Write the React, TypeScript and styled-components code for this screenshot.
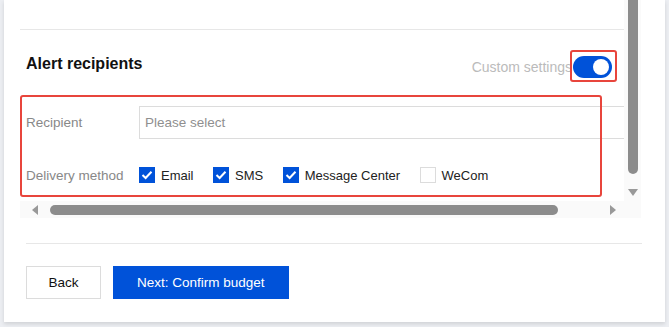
import React from "react";
import styled, { createGlobalStyle } from "styled-components";

const Global = createGlobalStyle`
  html, body { margin: 0; padding: 0; background: #eceef2; }
  body { font-family: "Liberation Sans", Arial, sans-serif; overflow: hidden; }
`;

const Page = styled.div`
  width: 669px;
  height: 327px;
  padding: 0 4px 5px 4px;
  box-sizing: border-box;
  display: flex;
`;

const Card = styled.div`
  flex: 1;
  background: #fff;
  box-shadow: 0 2px 4px rgba(0, 0, 0, 0.12);
  display: flex;
  flex-direction: column;
  padding-left: 16px;
  box-sizing: border-box;
`;

const ScrollBox = styled.div`
  width: 621px;
  height: 218px;
  display: grid;
  grid-template-columns: 604px 17px;
  grid-template-rows: 201px 17px;
`;

const Viewport = styled.div`
  overflow: hidden;
  position: relative;
  padding: 0 12px 0 6px;
  box-sizing: border-box;
  display: flex;
  flex-direction: column;
`;

const TopSpace = styled.div`
  height: 29px;
  flex: none;
  border-bottom: 1px solid #e7e7e7;
  margin: 0 -12px 0 -6px;
`;

const SectionHeader = styled.div`
  display: flex;
  align-items: center;
  justify-content: space-between;
  height: 32px;
  margin-top: 19px;
`;

const Title = styled.div`
  font-size: 16px;
  font-weight: 700;
  color: #111;
  margin-top: -3px;
`;

const SwitchWrap = styled.div`
  display: flex;
  align-items: center;
  gap: 1px;
`;

const SwitchLabel = styled.span`
  font-size: 14px;
  color: #bbbbbb;
  margin-top: 3px;
`;

const ToggleBox = styled.div`
  position: relative;
  margin-top: 4px;
`;

const Toggle = styled.div`
  width: 39px;
  height: 22px;
  border-radius: 11px;
  background: #0052d9;
  position: relative;
  &::after {
    content: "";
    position: absolute;
    right: 3px;
    top: 3px;
    width: 16px;
    height: 16px;
    border-radius: 50%;
    background: #fff;
  }
`;

const Highlight = styled.div<{ $w: number; $h: number; $l: number; $t: number }>`
  position: absolute;
  left: ${(p) => p.$l}px;
  top: ${(p) => p.$t}px;
  width: ${(p) => p.$w}px;
  height: ${(p) => p.$h}px;
  border: 2px solid #e8453c;
  border-radius: 3px;
  box-sizing: border-box;
  pointer-events: none;
`;

const Form = styled.div`
  display: flex;
  flex-direction: column;
  gap: 28px;
  margin-top: 25px;
  width: 620px;
`;

const Row = styled.div`
  display: flex;
  align-items: center;
`;

const Label = styled.div`
  width: 113px;
  flex: none;
  font-size: 13.5px;
  color: #888;
`;

const Input = styled.div`
  width: 500px;
  height: 33px;
  border: 1px solid #dcdcdc;
  box-sizing: border-box;
  display: flex;
  align-items: center;
  padding-left: 5px;
  font-size: 13.5px;
  color: #8f8f8f;
  flex: none;
`;

const Options = styled.div`
  display: flex;
  align-items: center;
  gap: 19.5px;
`;

const Option = styled.label`
  display: flex;
  align-items: center;
  gap: 6px;
  font-size: 13px;
  color: #222;
`;

const Box = styled.span<{ $checked: boolean }>`
  width: 16px;
  height: 16px;
  box-sizing: border-box;
  background: ${(p) => (p.$checked ? "#0052d9" : "#fff")};
  border: 1px solid ${(p) => (p.$checked ? "#0052d9" : "#dcdcdc")};
  display: flex;
  align-items: center;
  justify-content: center;
`;

const VTrack = styled.div`
  background: #fafafa;
  display: flex;
  flex-direction: column;
  align-items: center;
`;

const VThumb = styled.div`
  width: 10px;
  height: 177px;
  background: #8c8c8c;
  border-radius: 0 0 5px 5px;
  margin-left: 1px;
`;

const HTrack = styled.div`
  background: #fafafa;
  display: flex;
  align-items: center;
  padding: 0 8px 0 11px;
  box-sizing: border-box;
`;

const HThumb = styled.div`
  width: 508px;
  height: 10px;
  border-radius: 5px;
  background: #8c8c8c;
  margin: 0 51px 0 11px;
  flex: none;
`;

const Corner = styled.div`
  background: #fafafa;
`;

const Footer = styled.div`
  margin-top: 25px;
  margin-left: 6px;
  width: 616px;
  border-top: 1px solid #e7e7e7;
  padding-top: 22px;
  display: flex;
  gap: 12px;
`;

const Button = styled.button<{ $primary?: boolean }>`
  height: 33px;
  padding: 0 ${(p) => (p.$primary ? 23 : 21.5)}px;
  border: 1px solid ${(p) => (p.$primary ? "#0052d9" : "#dcdcdc")};
  background: ${(p) => (p.$primary ? "#0052d9" : "#fff")};
  color: ${(p) => (p.$primary ? "#fff" : "#111")};
  font-family: "Liberation Sans", Arial, sans-serif;
  font-size: 13.5px;
  border-radius: 0;
  cursor: pointer;
`;

const Check = () => (
  <svg width="12" height="10" viewBox="0 0 12 10">
    <path d="M1.5 5 L4.6 8 L10.5 1.8" fill="none" stroke="#fff" strokeWidth="2" />
  </svg>
);

const Tri = ({ dir }: { dir: "left" | "right" | "down" }) => {
  const d =
    dir === "left"
      ? "M7 0 L7 10 L1 5 Z"
      : dir === "right"
      ? "M1 0 L1 10 L7 5 Z"
      : "M0 1 L10 1 L5 8 Z";
  const w = dir === "down" ? 10 : 8;
  const h = dir === "down" ? 9 : 10;
  return (
    <svg width={w} height={h} viewBox={`0 0 ${w} ${h}`} style={{ flex: "none" }}>
      <path d={d} fill="#999" />
    </svg>
  );
};

const options = [
  { label: "Email", checked: true },
  { label: "SMS", checked: true },
  { label: "Message Center", checked: true },
  { label: "WeCom", checked: false },
];

export default function App() {
  return (
    <>
      <Global />
      <Page>
        <Card>
          <ScrollBox>
            <Viewport>
              <TopSpace />
              <SectionHeader>
                <Title>Alert recipients</Title>
                <SwitchWrap>
                  <SwitchLabel>Custom settings</SwitchLabel>
                  <ToggleBox>
                    <Toggle />
                    <Highlight $l={-3} $t={-6} $w={47} $h={32} />
                  </ToggleBox>
                </SwitchWrap>
              </SectionHeader>
              <Form>
                <Row>
                  <Label>Recipient</Label>
                  <Input>Please select</Input>
                </Row>
                <Row>
                  <Label>Delivery method</Label>
                  <Options>
                    {options.map((o) => (
                      <Option key={o.label}>
                        <Box $checked={o.checked}>{o.checked && <Check />}</Box>
                        {o.label}
                      </Option>
                    ))}
                  </Options>
                </Row>
              </Form>
              <Highlight $l={0} $t={95} $w={582} $h={102} />
            </Viewport>
            <VTrack>
              <VThumb />
              <div style={{ marginTop: 9 }}>
                <Tri dir="down" />
              </div>
            </VTrack>
            <HTrack>
              <Tri dir="left" />
              <HThumb />
              <Tri dir="right" />
            </HTrack>
            <Corner />
          </ScrollBox>
          <Footer>
            <Button>Back</Button>
            <Button $primary>Next: Confirm budget</Button>
          </Footer>
        </Card>
      </Page>
    </>
  );
}
